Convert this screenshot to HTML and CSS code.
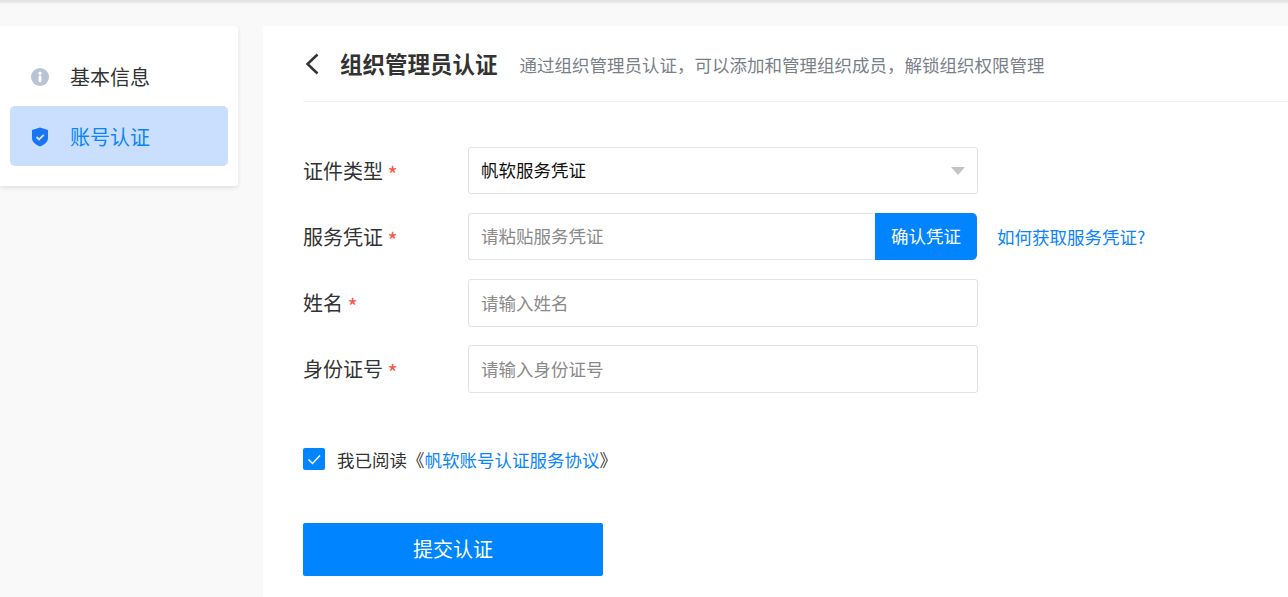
FILE: index.html
```html
<!DOCTYPE html>
<html lang="zh-CN">
<head>
<meta charset="utf-8">
<title>组织管理员认证</title>
<link rel="stylesheet" href="styles.css">
</head>
<body>
<div class="topbar"></div>
<div class="page">
  <aside class="side">
    <a class="nav-item">
      <svg class="nav-icon" viewBox="0 0 18 20"><circle cx="9" cy="10" r="9" fill="#b8c4d6"/><rect x="7.6" y="8.600" width="2.8" height="6.6" rx=".5" fill="#fff"/><circle cx="9" cy="6.200" r="1.6" fill="#fff"/></svg>
      <span>基本信息</span>
    </a>
    <a class="nav-item active">
      <svg class="nav-icon" viewBox="0 0 18 20"><path d="M9 0.5 17 3v8c0 4-3.5 6.8-8 8.5C4.500 17.800 1 15 1 11V3z" fill="#1976f2"/><path d="M5.500 10 8 12.500 12.800 7.800" fill="none" stroke="#cfe0fb" stroke-width="1.800"/></svg>
      <span>账号认证</span>
    </a>
  </aside>
  <main class="main">
    <header class="head">
      <svg class="back" viewBox="0 0 14 22"><path d="M12.500 1.500 2.500 11l10 9.500" fill="none" stroke="#333" stroke-width="2.500"/></svg>
      <h1 class="title">组织管理员认证</h1>
      <p class="sub">通过组织管理员认证，可以添加和管理组织成员，解锁组织权限管理</p>
    </header>
    <form class="form">
      <div class="row">
        <label class="label">证件类型 <i class="req">*</i></label>
        <div class="field select">帆软服务凭证<span class="caret"></span></div>
      </div>
      <div class="row">
        <label class="label">服务凭证 <i class="req">*</i></label>
        <div class="group">
          <div class="field ph grow">请粘贴服务凭证</div>
          <div class="confirm">确认凭证</div>
        </div>
        <a class="link help">如何获取服务凭证?</a>
      </div>
      <div class="row">
        <label class="label">姓名 <i class="req">*</i></label>
        <div class="field ph tall">请输入姓名</div>
      </div>
      <div class="row">
        <label class="label">身份证号 <i class="req">*</i></label>
        <div class="field ph tall">请输入身份证号</div>
      </div>
      <div class="agree">
        <span class="check"><svg viewBox="0 0 22 22"><path d="M5.500 11.500 9.500 15.500 17 7.500" fill="none" stroke="#fff" stroke-width="1.500"/></svg></span>
        <span>我已阅读《<a class="link">帆软账号认证服务协议</a>》</span>
      </div>
      <div class="submit">提交认证</div>
    </form>
  </main>
</div>
</body>
</html>
```
FILE: styles.css
```css
* { box-sizing: border-box; }
html, body { margin: 0; height: 100%; overflow: hidden; }
body {
  background: #f9f9f9;
  font-family: "Noto Sans CJK SC", "Liberation Sans", sans-serif;
  color: #333;
}
.topbar { height: 2px; background: #e4e4e4; box-shadow: 0 1px 2px rgba(0,0,0,.08); }
.page { display: flex; align-items: flex-start; gap: 25px; padding-top: 24px; height: 595px; }
.side {
  width: 238px;
  height: 160px;
  flex: none;
  background: #fff;
  border-radius: 0 3px 3px 0;
  box-shadow: 0 2px 4px rgba(0,0,0,.1);
  padding: 20px 10px;
  display: flex;
  flex-direction: column;
}
.nav-item {
  height: 60px;
  display: flex;
  align-items: center;
  gap: 21px;
  padding-left: 21px;
  font-size: 20px;
  border-radius: 5px;
  color: #333;
}
.nav-item.active { background: #c9dffd; color: #0a84ff; }
.nav-icon { width: 18px; height: 20px; flex: none; margin-top: 2px; }
.main { flex: 1; height: 100%; background: #fff; padding-left: 40px; }
.head {
  height: 76px;
  display: flex;
  align-items: center;
  border-bottom: 1px solid #f2f2f2;
}
.back { width: 14px; height: 22px; margin-left: 2px; margin-right: 21px; flex: none; }
.title { margin: 0 22px 2px 0; font-size: 22.500px; font-weight: 700; color: #333; line-height: 30px; }
.sub { margin: 2px 0 0; font-size: 17.500px; color: #7a7f88; line-height: 26px; white-space: nowrap; }
.form { padding-top: 45px; }
.row { display: flex; align-items: flex-start; height: 48px; margin-bottom: 18px; }
.label { width: 165px; flex: none; font-size: 20px; color: #333; height: 47px; line-height: 47px; }
.req { color: #f5574a; font-style: normal; font-size: 22px; line-height: 1; vertical-align: -4px; }
.field {
  width: 510px;
  height: 47px;
  border: 1px solid #e2e2e2;
  border-radius: 3px;
  padding: 0 0 2px 12px;
  display: flex;
  align-items: center;
  font-size: 17.500px;
  color: #111;
  background: #fff;
}
.field.tall { height: 48px; }
.ph { color: #8a8a8a; }
.select { position: relative; }
.caret {
  position: absolute;
  right: 12px;
  top: 19px;
  border-left: 7px solid transparent;
  border-right: 7px solid transparent;
  border-top: 8px solid #c4c4c4;
}
.group { display: flex; width: 509px; height: 47px; flex: none; }
.group .grow { flex: 1; width: auto; border-right: 0; border-radius: 3px 0 0 3px; }
.confirm {
  width: 102px;
  background: #0084ff;
  color: #fff;
  font-size: 17.500px;
  border-radius: 0 5px 5px 0;
  padding-bottom: 2px;
  display: flex;
  align-items: center;
  justify-content: center;
}
.link { color: #0a84ff; }
.help { margin-left: 20px; font-size: 17.500px; white-space: nowrap; line-height: 47px; }
.agree { display: flex; align-items: center; gap: 12px; margin-top: 52px; font-size: 17.500px; height: 28px; color: #333; }
.check {
  width: 22px;
  height: 22px;
  background: #0084ff;
  border-radius: 2px;
  display: flex;
}
.check svg { width: 22px; height: 22px; }
.submit {
  width: 300px;
  height: 53px;
  margin-top: 50px;
  padding-bottom: 2px;
  background: #0084ff;
  color: #fff;
  font-size: 20px;
  border-radius: 2px;
  display: flex;
  align-items: center;
  justify-content: center;
}
```
